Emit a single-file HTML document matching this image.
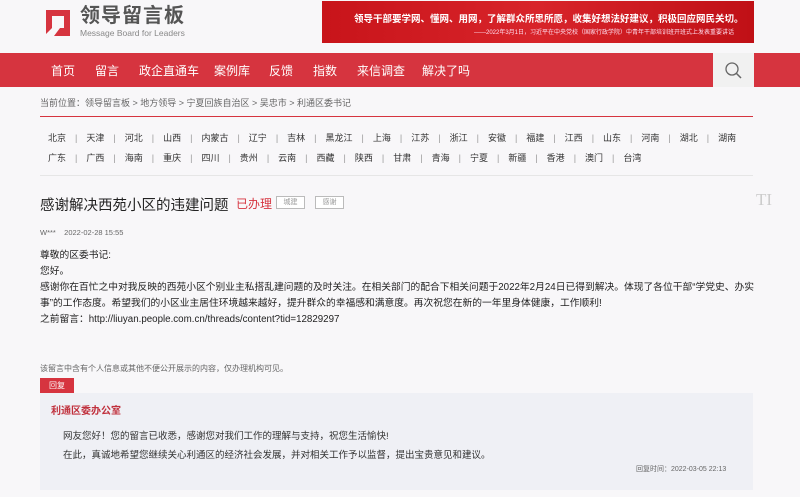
<!DOCTYPE html>
<html><head><meta charset="utf-8"><style>
*{margin:0;padding:0;box-sizing:border-box}
body{width:800px;height:497px;background:#f8f7f9;font-family:"Liberation Sans","Noto Sans CJK SC",sans-serif;color:#333;position:relative;overflow:hidden}
.a{position:absolute;white-space:nowrap}
.nav{position:absolute;left:0;top:53px;width:800px;height:34px;background:#d6343f}
.nav span{position:absolute;top:9px;color:#fff;font-size:12px}
.prov{font-size:9px;color:#333}
.prov i{font-style:normal;color:#999;margin:0 9px}
p{font-size:9.75px;line-height:16px}
</style></head><body>
<svg class="a" style="left:40px;top:6px" width="34" height="32" viewBox="0 0 34 32"><path d="M6 4 L30 4 L30 30 L14 30 L20 22 L24 22 L24 10 L12 10 L12 22 L6 28 Z" fill="#d6343f"/></svg>
<div class="a" style="left:80px;top:4px;font-size:20px;line-height:24px;font-weight:bold;color:#555;letter-spacing:1px">领导留言板</div>
<div class="a" style="left:80px;top:28px;font-size:8.5px;color:#888">Message Board for Leaders</div>
<div class="a" style="left:322px;top:1px;width:432px;height:42px;background:linear-gradient(90deg,#c8141a,#d8242a 50%,#c01016);overflow:hidden">
<div class="a" style="left:32px;top:10px;color:#fff;font-size:9.5px;font-weight:bold">领导干部要学网、懂网、用网，了解群众所思所愿，收集好想法好建议，积极回应网民关切。</div>
<div class="a" style="left:152px;top:26px;color:#fde;font-size:6px">——2022年3月1日，习近平在中央党校（国家行政学院）中青年干部培训班开班式上发表重要讲话</div></div>
<div class="nav">
<span style="left:51px">首页</span><span style="left:95px">留言</span><span style="left:139px">政企直通车</span><span style="left:214px">案例库</span><span style="left:269px">反馈</span><span style="left:313px">指数</span><span style="left:357px">来信调查</span><span style="left:422px">解决了吗</span>
<div class="a" style="left:713px;top:0;width:41px;height:34px;background:#f1f1f1"><svg width="41" height="34"><circle cx="19" cy="16" r="6" fill="none" stroke="#666" stroke-width="1.3"/><line x1="23.5" y1="20.5" x2="28" y2="25" stroke="#666" stroke-width="1.5"/></svg></div>
</div>
<div class="a" style="left:40px;top:96px;font-size:9px;color:#666">当前位置：领导留言板 &gt; 地方领导 &gt; 宁夏回族自治区 &gt; 吴忠市 &gt; 利通区委书记</div>
<div class="a" style="left:40px;top:116px;width:713px;height:1px;background:#d6343f"></div>
<div class="a prov" style="left:48px;top:131px">北京<i>|</i>天津<i>|</i>河北<i>|</i>山西<i>|</i>内蒙古<i>|</i>辽宁<i>|</i>吉林<i>|</i>黑龙江<i>|</i>上海<i>|</i>江苏<i>|</i>浙江<i>|</i>安徽<i>|</i>福建<i>|</i>江西<i>|</i>山东<i>|</i>河南<i>|</i>湖北<i>|</i>湖南</div>
<div class="a prov" style="left:48px;top:151px">广东<i>|</i>广西<i>|</i>海南<i>|</i>重庆<i>|</i>四川<i>|</i>贵州<i>|</i>云南<i>|</i>西藏<i>|</i>陕西<i>|</i>甘肃<i>|</i>青海<i>|</i>宁夏<i>|</i>新疆<i>|</i>香港<i>|</i>澳门<i>|</i>台湾</div>
<div class="a" style="left:40px;top:175px;width:713px;height:1px;background:#e6e6e6"></div>
<div class="a" style="left:40px;top:194px;font-size:14.5px;color:#222">感谢解决西苑小区的违建问题</div>
<div class="a" style="left:236px;top:195px;font-size:12px;color:#d6343f">已办理</div>
<div class="a" style="left:276px;top:196px;width:29px;height:13px;border:1px solid #bbb;font-size:7px;color:#999;text-align:center;line-height:11px;background:#fff">城建</div>
<div class="a" style="left:315px;top:196px;width:29px;height:13px;border:1px solid #bbb;font-size:7px;color:#999;text-align:center;line-height:11px;background:#fff">感谢</div>
<div class="a" style="left:756px;top:190px;font-size:17px;color:#ccc;font-family:'Liberation Serif',serif">TI</div>
<div class="a" style="left:40px;top:228px;font-size:7.5px;color:#666">W***&nbsp;&nbsp;&nbsp;&nbsp;2022-02-28 15:55</div>
<div class="a" style="left:40px;top:248px;color:#222">
<p>尊敬的区委书记:</p><p>您好。</p>
<p>感谢你在百忙之中对我反映的西苑小区个别业主私搭乱建问题的及时关注。在相关部门的配合下相关问题于2022年2月24日已得到解决。体现了各位干部“学党史、办实<br>事”的工作态度。希望我们的小区业主居住环境越来越好，提升群众的幸福感和满意度。再次祝您在新的一年里身体健康，工作顺利!</p>
<p>之前留言：http://liuyan.people.com.cn/threads/content?tid=12829297</p></div>
<div class="a" style="left:40px;top:363px;font-size:8px;color:#666">该留言中含有个人信息或其他不便公开展示的内容，仅办理机构可见。</div>
<div class="a" style="left:40px;top:378px;width:34px;height:15px;background:#d6343f;color:#fff;font-size:8px;text-align:center;line-height:15px">回复</div>
<div class="a" style="left:40px;top:393px;width:713px;height:97px;background:#eff0f5"></div>
<div class="a" style="left:51px;top:402px;font-size:10px;font-weight:bold;color:#c0303c">利通区委办公室</div>
<div class="a" style="left:63px;top:428px;font-size:9.5px;color:#333">网友您好！您的留言已收悉，感谢您对我们工作的理解与支持，祝您生活愉快!</div>
<div class="a" style="left:63px;top:447px;font-size:9.5px;color:#333">在此，真诚地希望您继续关心利通区的经济社会发展，并对相关工作予以监督，提出宝贵意见和建议。</div>
<div class="a" style="left:636px;top:464px;font-size:7px;color:#666">回复时间：2022-03-05 22:13</div>
</body></html>
